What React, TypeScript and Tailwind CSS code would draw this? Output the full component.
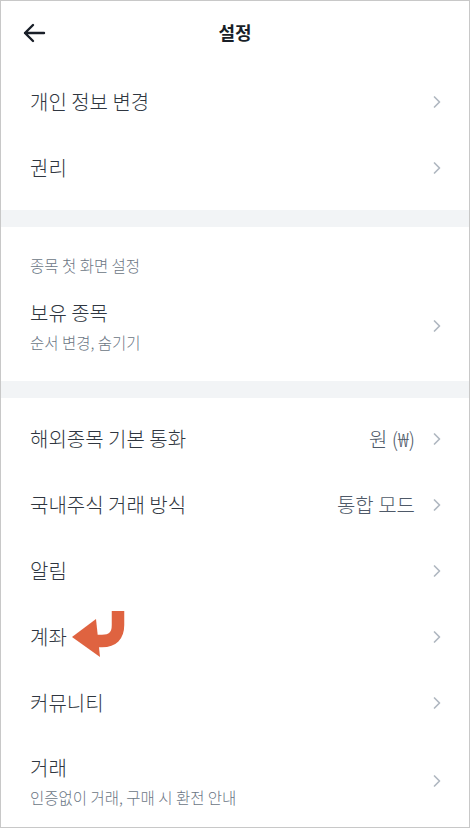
const font = { fontFamily: "'Noto Sans CJK KR', 'Noto Sans', sans-serif" }

function Chevron() {
  return (
    <svg width="10" height="14" viewBox="0 0 10 14" fill="none" className="shrink-0">
      <path d="M2.5 2 L7.5 7 L2.5 12" stroke="#b0b8c1" strokeWidth="1.7" strokeLinecap="round" strokeLinejoin="round" />
    </svg>
  )
}

function Row({ label, value, children }: { label: string; value?: string; children?: React.ReactNode }) {
  return (
    <div className="h-[66px] flex items-center pl-[29px] pr-[27px]">
      <div className="relative flex-1 text-[20px] font-light leading-[28px] text-[#2f3640]">
        {label}
        {children}
      </div>
      {value && <span className="mr-[17px] text-[20px] font-light leading-[28px] text-[#4e5968]">{value}</span>}
      <Chevron />
    </div>
  )
}

function SubRow({ label, sub, className }: { label: string; sub: string; className: string }) {
  return (
    <div className={`flex items-center pl-[29px] pr-[27px] ${className}`}>
      <div className="flex-1 flex flex-col">
        <span className="text-[20px] font-light leading-[28px] text-[#2f3640]">{label}</span>
        <span className="mt-[4px] text-[15.5px] font-light leading-[22px] text-[#6b7684]">{sub}</span>
      </div>
      <Chevron />
    </div>
  )
}

function Gap() {
  return <div className="h-[17px] bg-[#f2f4f6]" />
}

export default function App() {
  return (
    <div className="w-[470px] h-[828px] bg-white border border-[#c8c8c8] overflow-hidden flex flex-col" style={font}>
      {/* Header */}
      <div className="h-[63px] relative flex items-center justify-center shrink-0">
        <button className="absolute left-[20px] top-[19px] p-0" aria-label="back">
          <svg width="26" height="26" viewBox="0 0 26 26" fill="none">
            <path d="M23 13 H4 M12 5 L4 13 L12 21" stroke="#191f28" strokeWidth="2.4" strokeLinecap="round" strokeLinejoin="round" />
          </svg>
        </button>
        <span className="text-[18px] font-bold text-[#191f28]">설정</span>
      </div>

      <div className="pt-[5px] pb-[9px]">
        <Row label="개인 정보 변경" />
        <Row label="권리" />
      </div>

      <Gap />

      <div className="pb-[8px]">
        <div className="pt-[28px] pl-[29px] text-[15.5px] font-light leading-[20px] text-[#6b7684]">종목 첫 화면 설정</div>
        <SubRow label="보유 종목" sub="순서 변경, 숨기기" className="pt-[24px] pb-[20px]" />
      </div>

      <Gap />

      <div className="pt-[8px] flex-1 flex flex-col">
        <Row label="해외종목 기본 통화" value="원 (₩)" />
        <Row label="국내주식 거래 방식" value="통합 모드" />
        <Row label="알림" />
        <Row label="계좌">
          <svg
            className="absolute left-[42px] top-[-12px]"
            width="54"
            height="47"
            viewBox="0 0 54 47"
            fill="none"
          >
            <path d="M18 30 L30 30 Q46 30 46 14 L46 0" stroke="#df6340" strokeWidth="12.5" />
            <polygon points="0,26 24,8 28,46" fill="#df6340" />
          </svg>
        </Row>
        <Row label="커뮤니티" />
        <SubRow label="거래" sub="인증없이 거래, 구매 시 환전 안내" className="pt-[18px] pb-[18px]" />
      </div>
    </div>
  )
}
